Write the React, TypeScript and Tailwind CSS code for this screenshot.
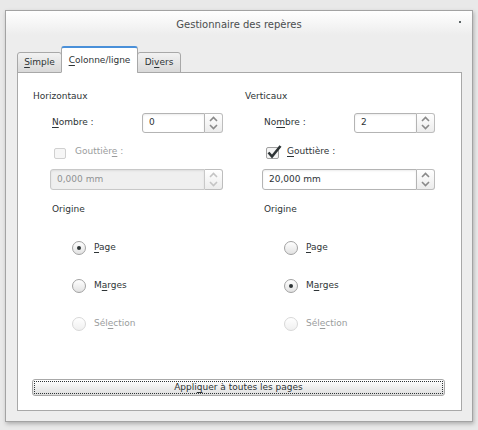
import React from "react";

const font = { fontFamily: '"DejaVu Sans", Verdana, sans-serif' };

function U({ children }: { children: React.ReactNode }) {
  return <span className="underline underline-offset-2 decoration-1">{children}</span>;
}

function Spinner({ disabled }: { disabled?: boolean }) {
  const c = disabled ? "#c4c4c4" : "#8a8a8a";
  return (
    <div className="w-[18px] h-full flex flex-col items-center justify-between py-[2px] border border-l-0 border-[#bdbdbd] rounded-r-[3px] bg-gradient-to-b from-white to-[#ececec]">
      <svg width="9" height="6" viewBox="0 0 9 6">
        <path d="M1 5 L4.5 1.5 L8 5" fill="none" stroke={c} strokeWidth="1.6" />
      </svg>
      <svg width="9" height="6" viewBox="0 0 9 6">
        <path d="M1 1 L4.5 4.5 L8 1" fill="none" stroke={c} strokeWidth="1.6" />
      </svg>
    </div>
  );
}

function SpinBox(props: { value: string; width: string; disabled?: boolean }) {
  const { value, width, disabled } = props;
  return (
    <div className="flex h-full">
      <div
        className={`${width} h-full flex items-center pl-[6px] border border-[#b4b4b4] rounded-l-[3px] shadow-[inset_0_1px_2px_rgba(0,0,0,0.08)] ${
          disabled ? "bg-[#efefef] text-[#8f9293] border-[#c8c8c8]" : "bg-white text-[#2e3436]"
        }`}
      >
        {value}
      </div>
      <Spinner disabled={disabled} />
    </div>
  );
}

function Radio({ checked, disabled, label }: { checked?: boolean; disabled?: boolean; label: React.ReactNode }) {
  return (
    <div className="h-[20px] flex items-center">
      <div
        className={`w-[14px] h-[14px] rounded-full border flex items-center justify-center bg-gradient-to-b ${
          disabled ? "border-[#d8d8d8] from-white to-[#f0f0f0]" : "border-[#a2a2a2] from-white to-[#e2e2e2]"
        }`}
      >
        {checked && <div className="w-[4px] h-[4px] rounded-full bg-[#2e3436]" />}
      </div>
      <span className={`ml-[8px] ${disabled ? "text-[#9a9c9d]" : "text-[#2e3436]"}`}>{label}</span>
    </div>
  );
}

function Column(props: {
  title: string;
  nombre: React.ReactNode;
  value: string;
  gutterOn: boolean;
  gutter: React.ReactNode;
  gutterValue: string;
  origin: "page" | "marges";
}) {
  const { title, nombre, value, gutterOn, gutter, gutterValue, origin } = props;
  return (
    <div className="w-[212px] flex flex-col text-[#2e3436]">
      <div className="h-[12px] leading-[12px]">{title}</div>

      <div className="mt-[11px] h-[20px] flex items-center">
        <span className="ml-[19px] w-[90px]">{nombre}</span>
        <SpinBox value={value} width="w-[63px]" />
      </div>

      <div className="mt-[9px] h-[20px] flex items-center">
        {gutterOn ? (
          <svg width="20" height="16" viewBox="0 0 20 16" className="ml-[21px]">
            <rect x="0.5" y="3.5" width="12" height="11" rx="1.5" fill="#f4f4f4" stroke="#a0a0a0" />
            <path d="M2.5 8.5 L6 12.5 L14.5 2" fill="none" stroke="#2e3436" strokeWidth="2.6" />
          </svg>
        ) : (
          <div className="ml-[21px] w-[12px] h-[11px] mt-[3px] rounded-[2px] border border-[#d0d0d0] bg-[#f6f6f6]" />
        )}
        <span className={gutterOn ? "ml-[1px]" : "ml-[9px] text-[#9a9c9d]"}>{gutter}</span>
      </div>

      <div className="mt-[7px] h-[21px] flex items-center">
        <div className="ml-[17px] h-full">
          <SpinBox value={gutterValue} width="w-[155px]" disabled={!gutterOn} />
        </div>
      </div>

      <div className="mt-[13px] h-[12px] leading-[12px] ml-[19px]">Origine</div>

      <div className="mt-[23px] ml-[39px] flex flex-col gap-[18px]">
        <Radio checked={origin === "page"} label={<><U>P</U>age</>} />
        <Radio checked={origin === "marges"} label={<>M<U>a</U>rges</>} />
        <Radio disabled label={<>Sél<U>e</U>ction</>} />
      </div>
    </div>
  );
}

export default function App() {
  return (
    <div className="w-[478px] h-[430px] bg-[#e9e9e9] pl-[5px] pt-[10px] text-[9px]" style={font}>
      <div className="w-[468px] h-[412px] border border-[#a3a3a3] bg-[#ededed] shadow-[1px_2px_4px_rgba(0,0,0,0.25)] flex flex-col">
        {/* title bar */}
        <div className="h-[24px] flex items-center justify-center relative bg-gradient-to-b from-white to-[#ededed]">
          <span className="text-[10px] text-[#4a4d4e] mt-[2px]">Gestionnaire des repères</span>
          <div className="absolute right-[11px] top-[10px] w-[2px] h-[2px] bg-[#5d6566]" />
        </div>

        {/* tabs */}
        <div className="mt-[11px] ml-[11px] h-[27px] flex items-end relative z-10 -mb-px">
          <div className="w-[45px] h-[21px] flex items-center justify-center border border-[#a8a8a8] rounded-t-[3px] bg-gradient-to-b from-[#f2f2f2] to-[#d9d9d9] text-[#2e3436]">
            <span><U>S</U>imple</span>
          </div>
          <div className="w-[77px] h-[27px] flex items-center justify-center border border-[#a8a8a8] border-t-2 border-t-[#4a90d9] border-b-white rounded-t-[3px] bg-white text-[#2e3436] -ml-px pt-[2px]">
            <span><U>C</U>olonne/ligne</span>
          </div>
          <div className="w-[44px] h-[21px] flex items-center justify-center border border-[#a8a8a8] rounded-t-[3px] bg-gradient-to-b from-[#f2f2f2] to-[#d9d9d9] text-[#2e3436] -ml-px">
            <span>Di<U>v</U>ers</span>
          </div>
        </div>

        {/* page */}
        <div className="ml-[11px] w-[445px] h-[339px] border border-[#a8a8a8] bg-white flex flex-col">
          <div className="pt-[17px] pl-[15px] flex">
            <Column
              title="Horizontaux"
              nombre={<><U>N</U>ombre :</>}
              value="0"
              gutterOn={false}
              gutter={<>Gouttièr<U>e</U> :</>}
              gutterValue="0,000 mm"
              origin="page"
            />
            <Column
              title="Verticaux"
              nombre={<>No<U>m</U>bre :</>}
              value="2"
              gutterOn={true}
              gutter={<><U>G</U>outtière :</>}
              gutterValue="20,000 mm"
              origin="marges"
            />
          </div>

          <div className="mt-auto mb-[14px] ml-[14px] w-[413px] h-[17px] border border-[#a8a8a8] rounded-[3px] bg-gradient-to-b from-white to-[#dedede] p-[1px]">
            <div className="w-full h-full border border-dotted border-[#2e3436] flex items-center justify-center text-[#2e3436]">
              <span>Appli<U>q</U>uer à toutes les pages</span>
            </div>
          </div>
        </div>
      </div>
    </div>
  );
}
